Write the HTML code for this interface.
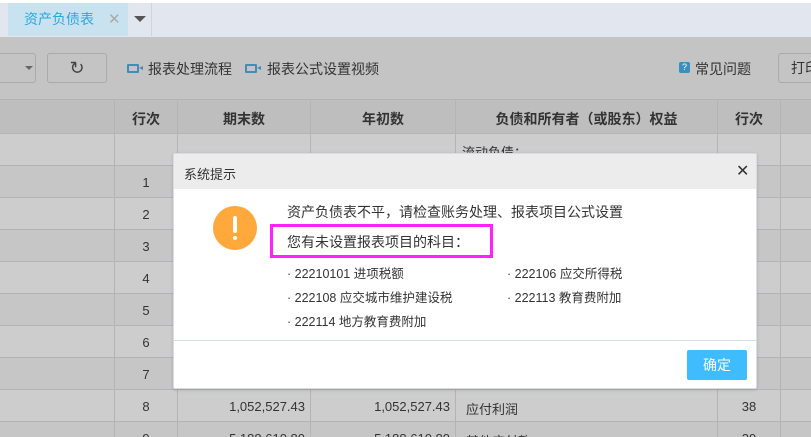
<!DOCTYPE html>
<html><head><meta charset="utf-8"><style>
*{margin:0;padding:0;box-sizing:border-box}
html{width:811px;height:437px;overflow:hidden}
body{width:811px;height:437px;overflow:hidden;position:relative;background:#c4c4c4;font-family:"Liberation Sans","Noto Sans CJK SC",sans-serif;color:#333}
.abs{position:absolute}
.tabbar{left:0;top:0;width:811px;height:37px;background:#e2e6ee;border-top:3px solid #fff}
.tab{left:8px;top:3px;width:120px;height:33px;background:#c9e2f0;color:#29a8e0;font-size:14px;line-height:33px;padding-left:16px}
.row{left:0;width:811px;height:32px;border-bottom:1px solid #b3b3b8}
.vl{top:99px;width:1px;height:338px;background:#b3b3b8}
.c{position:absolute;font-size:13px;color:#333;text-align:center}
.cam{position:absolute;width:12px;height:9px;border:2px solid #3b8fb8;border-radius:1px}
.cam:after{content:"";position:absolute;left:10px;top:0;border-top:2px solid transparent;border-bottom:2px solid transparent;border-right:4px solid #3b8fb8}
</style></head><body>
<div class="abs tabbar"></div>
<div class="abs tab">资产负债表<span style="color:#aaa;margin-left:14px;font-size:15px">✕</span></div>
<div class="abs" style="left:134px;top:16px;border-left:6px solid transparent;border-right:6px solid transparent;border-top:6px solid #555"></div>
<div class="abs" style="left:151px;top:3px;width:1px;height:33px;background:#d0d4dc"></div>
<div class="abs" style="left:-4px;top:53px;width:40px;height:30px;border:1px solid #aaa;border-radius:3px"></div>
<div class="abs" style="left:25px;top:66px;border-left:4px solid transparent;border-right:4px solid transparent;border-top:4px solid #666"></div>
<div class="abs" style="left:47px;top:53px;width:60px;height:30px;border:1px solid #aaa;border-radius:3px;text-align:center;font-size:18px;line-height:28px;color:#444">↻</div>
<div class="cam" style="left:127px;top:64px"></div>
<div class="abs" style="left:148px;top:59px;font-size:14px">报表处理流程</div>
<div class="cam" style="left:245px;top:64px"></div>
<div class="abs" style="left:267px;top:59px;font-size:14px">报表公式设置视频</div>
<div class="abs" style="left:679px;top:62px;width:11px;height:11px;background:#3b8fb8;border-radius:2px;color:#fff;font-size:9px;line-height:11px;text-align:center">?</div>
<div class="abs" style="left:695px;top:59px;font-size:14px">常见问题</div>
<div class="abs" style="left:778px;top:53px;width:50px;height:30px;border:1px solid #aaa;border-radius:3px;font-size:14px;line-height:28px;padding-left:12px">打印</div>
<div class="abs row" style="top:99px;height:35px;background:#bebebe;border-top:1px solid #b3b3b8"></div>
<div class="abs row" style="top:134px;background:#cdcdcd"></div>
<div class="abs row" style="top:166px;background:#c6c6c6"></div>
<div class="abs row" style="top:198px;background:#cdcdcd"></div>
<div class="abs row" style="top:230px;background:#c6c6c6"></div>
<div class="abs row" style="top:262px;background:#cdcdcd"></div>
<div class="abs row" style="top:294px;background:#c6c6c6"></div>
<div class="abs row" style="top:326px;background:#cdcdcd"></div>
<div class="abs row" style="top:358px;background:#c6c6c6"></div>
<div class="abs row" style="top:390px;background:#cdcdcd"></div>
<div class="abs row" style="top:422px;height:15px;border-bottom:none;background:#c6c6c6"></div>
<div class="abs vl" style="left:114px"></div><div class="abs vl" style="left:177px"></div><div class="abs vl" style="left:310px"></div><div class="abs vl" style="left:455px"></div><div class="abs vl" style="left:717px"></div><div class="abs vl" style="left:780px"></div>
<div class="c" style="left:115px;width:62px;top:109px;font-weight:bold;font-size:14px">行次</div>
<div class="c" style="left:178px;width:132px;top:109px;font-weight:bold;font-size:14px">期末数</div>
<div class="c" style="left:311px;width:144px;top:109px;font-weight:bold;font-size:14px">年初数</div>
<div class="c" style="left:456px;width:261px;top:109px;font-weight:bold;font-size:14px">负债和所有者（或股东）权益</div>
<div class="c" style="left:718px;width:62px;top:109px;font-weight:bold;font-size:14px">行次</div>
<div class="c" style="left:462px;top:142px">流动负债：</div>
<div class="c" style="left:115px;width:62px;top:175px">1</div>
<div class="c" style="left:115px;width:62px;top:207px">2</div>
<div class="c" style="left:115px;width:62px;top:239px">3</div>
<div class="c" style="left:115px;width:62px;top:271px">4</div>
<div class="c" style="left:115px;width:62px;top:303px">5</div>
<div class="c" style="left:115px;width:62px;top:335px">6</div>
<div class="c" style="left:115px;width:62px;top:367px">7</div>
<div class="c" style="left:115px;width:62px;top:399px">8</div>
<div class="c" style="left:178px;width:127px;top:399px;text-align:right">1,052,527.43</div>
<div class="c" style="left:311px;width:139px;top:399px;text-align:right">1,052,527.43</div>
<div class="c" style="left:466px;top:399px">应付利润</div>
<div class="c" style="left:718px;width:62px;top:399px">38</div>
<div class="c" style="left:115px;width:62px;top:431px">9</div>
<div class="c" style="left:178px;width:127px;top:431px;text-align:right">5,188,610.80</div>
<div class="c" style="left:311px;width:139px;top:431px;text-align:right">5,188,610.80</div>
<div class="c" style="left:466px;top:431px">其他应付款</div>
<div class="c" style="left:718px;width:62px;top:431px">39</div>
<div class="abs" style="left:173px;top:153px;width:584px;height:236px;background:#fff;border:1px solid #d6dde5;border-radius:2px;box-shadow:0 1px 3px rgba(0,0,0,.15)">
 <div class="abs" style="left:0;top:0;width:582px;height:35px;background:#ececec"></div>
 <div class="abs" style="left:10px;top:10px;font-size:13px">系统提示</div>
 <div class="abs" style="left:562px;top:7px;font-size:16px;color:#333">✕</div>
 <div class="abs" style="left:39px;top:52px;width:44px;height:44px;border-radius:50%;background:#ffa83c"></div>
 <div class="abs" style="left:59px;top:62px;width:4px;height:17px;background:#fff;border-radius:2px"></div>
 <div class="abs" style="left:59px;top:82px;width:4px;height:4px;background:#fff;border-radius:2px"></div>
 <div class="abs" style="left:113px;top:48px;font-size:14px">资产负债表不平，请检查账务处理、报表项目公式设置</div>
 <div class="abs" style="left:96px;top:70px;width:223px;height:34px;border:3px solid #ff22ff"></div>
 <div class="abs" style="left:113px;top:78px;font-size:14px">您有未设置报表项目的科目：</div>
 <div class="abs" style="left:113px;top:109px;font-size:12.5px">· 22210101 进项税额</div>
 <div class="abs" style="left:333px;top:109px;font-size:12.5px">· 222106 应交所得税</div>
 <div class="abs" style="left:113px;top:133px;font-size:12.5px">· 222108 应交城市维护建设税</div>
 <div class="abs" style="left:333px;top:133px;font-size:12.5px">· 222113 教育费附加</div>
 <div class="abs" style="left:113px;top:157px;font-size:12.5px">· 222114 地方教育费附加</div>
 <div class="abs" style="left:0;top:186px;width:582px;height:1px;background:#cfe0ec"></div>
 <div class="abs" style="left:513px;top:196px;width:60px;height:30px;background:#3ebcfd;border-radius:2px;color:#fff;font-size:14px;line-height:30px;text-align:center">确定</div>
</div>
</body></html>
